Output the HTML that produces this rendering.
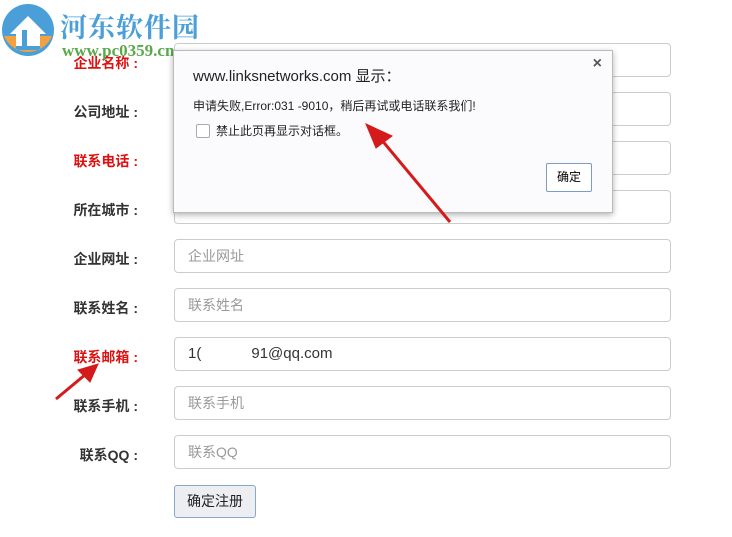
<!DOCTYPE html>
<html><head><meta charset="utf-8"><style>
body{margin:0;width:732px;height:537px;background:#fff;position:relative;overflow:hidden;font-family:"Liberation Sans","Noto Sans CJK SC",sans-serif}
.l{position:absolute;right:594px;font-size:14px;font-weight:bold;color:#333;line-height:20px;white-space:pre}
.r{color:#d11}
.i{position:absolute;left:174px;border:1px solid #ccc;border-radius:4px;font-size:14px;color:#999;line-height:32px;padding-left:13px;box-sizing:border-box;width:497px;height:34px}
</style></head><body>
<div class="i" style="top:43px"></div><div class="l r" style="top:53px">企业名称 :</div>
<div class="i" style="top:92px"></div><div class="l" style="top:102px">公司地址 :</div>
<div class="i" style="top:141px"></div><div class="l r" style="top:151px">联系电话 :</div>
<div class="i" style="top:190px"></div><div class="l" style="top:200px">所在城市 :</div>
<div class="i" style="top:239px">企业网址</div><div class="l" style="top:249px">企业网址 :</div>
<div class="i" style="top:288px">联系姓名</div><div class="l" style="top:298px">联系姓名 :</div>
<div class="i" style="top:337px;color:#333;font-size:15px">1(&nbsp;&nbsp;&nbsp;&nbsp;&nbsp;&nbsp;&nbsp;&nbsp;&nbsp;&nbsp;&nbsp;&nbsp;91@qq.com</div><div class="l r" style="top:347px">联系邮箱 :</div>
<div class="i" style="top:386px">联系手机</div><div class="l" style="top:396px">联系手机 :</div>
<div class="i" style="top:435px">联系QQ</div><div class="l" style="top:445px">联系QQ :</div>
<div style="position:absolute;left:174px;top:485px;width:82px;height:33px;box-sizing:border-box;border:1px solid #8aa6c8;border-radius:3px;background:#eceef2;font-size:14px;text-align:center;line-height:31px;color:#222">确定注册</div>
<svg style="position:absolute;left:0;top:0" width="60" height="62"><circle cx="28" cy="30" r="26" fill="#4a9fd8"/><path d="M4 36 A26 26 0 0 0 52 36 L40 36 L40 50 L16 50 L16 36Z" fill="#f2a040"/><path d="M10 34 L28 16 L46 34 L40 34 L40 46 L16 46 L16 34Z" fill="#fff"/><rect x="22" y="30" width="5" height="16" fill="#4a9fd8"/></svg>
<div style="position:absolute;left:60px;top:6px;font-size:27px;font-weight:bold;color:#4a9fd8;font-family:'Noto Serif CJK SC',serif;letter-spacing:1px">河东软件园</div>
<div style="position:absolute;left:62px;top:41px;font-size:17px;font-weight:bold;color:#5aa84a;font-family:'Liberation Serif',serif">www.pc0359.cn</div>
<div style="position:absolute;left:173px;top:50px;width:440px;height:163px;box-sizing:border-box;border:1px solid #bbb;background:#fbfbfd;box-shadow:0 2px 6px rgba(0,0,0,.3)">
<div style="position:absolute;left:19px;top:14px;font-size:15px;color:#222">www.linksnetworks.com 显示：</div>
<div style="position:absolute;right:10px;top:4px;font-size:16px;color:#555;font-weight:bold">×</div>
<div style="position:absolute;left:19px;top:46px;font-size:12px;color:#222">申请失败,Error:031 -9010，稍后再试或电话联系我们!</div>
<div style="position:absolute;left:22px;top:73px;width:12px;height:12px;border:1px solid #aaa;border-radius:2px;background:#fff"></div>
<div style="position:absolute;left:42px;top:71px;font-size:12px;color:#222">禁止此页再显示对话框。</div>
<div style="position:absolute;left:372px;top:112px;width:46px;height:29px;box-sizing:border-box;border:1px solid #7a9cc8;border-radius:2px;background:#fff;font-size:12px;text-align:center;line-height:27px">确定</div>
</div>
<svg style="position:absolute;left:0;top:0" width="732" height="537"><g fill="#d41a1a" stroke="#d41a1a"><line x1="450" y1="222" x2="380" y2="138" stroke-width="3"/><polygon points="366,124 392,136 376,148"/><line x1="56" y1="399" x2="86" y2="374" stroke-width="3"/><polygon points="98,364 90,382 78,370"/></g></svg>
</body></html>
